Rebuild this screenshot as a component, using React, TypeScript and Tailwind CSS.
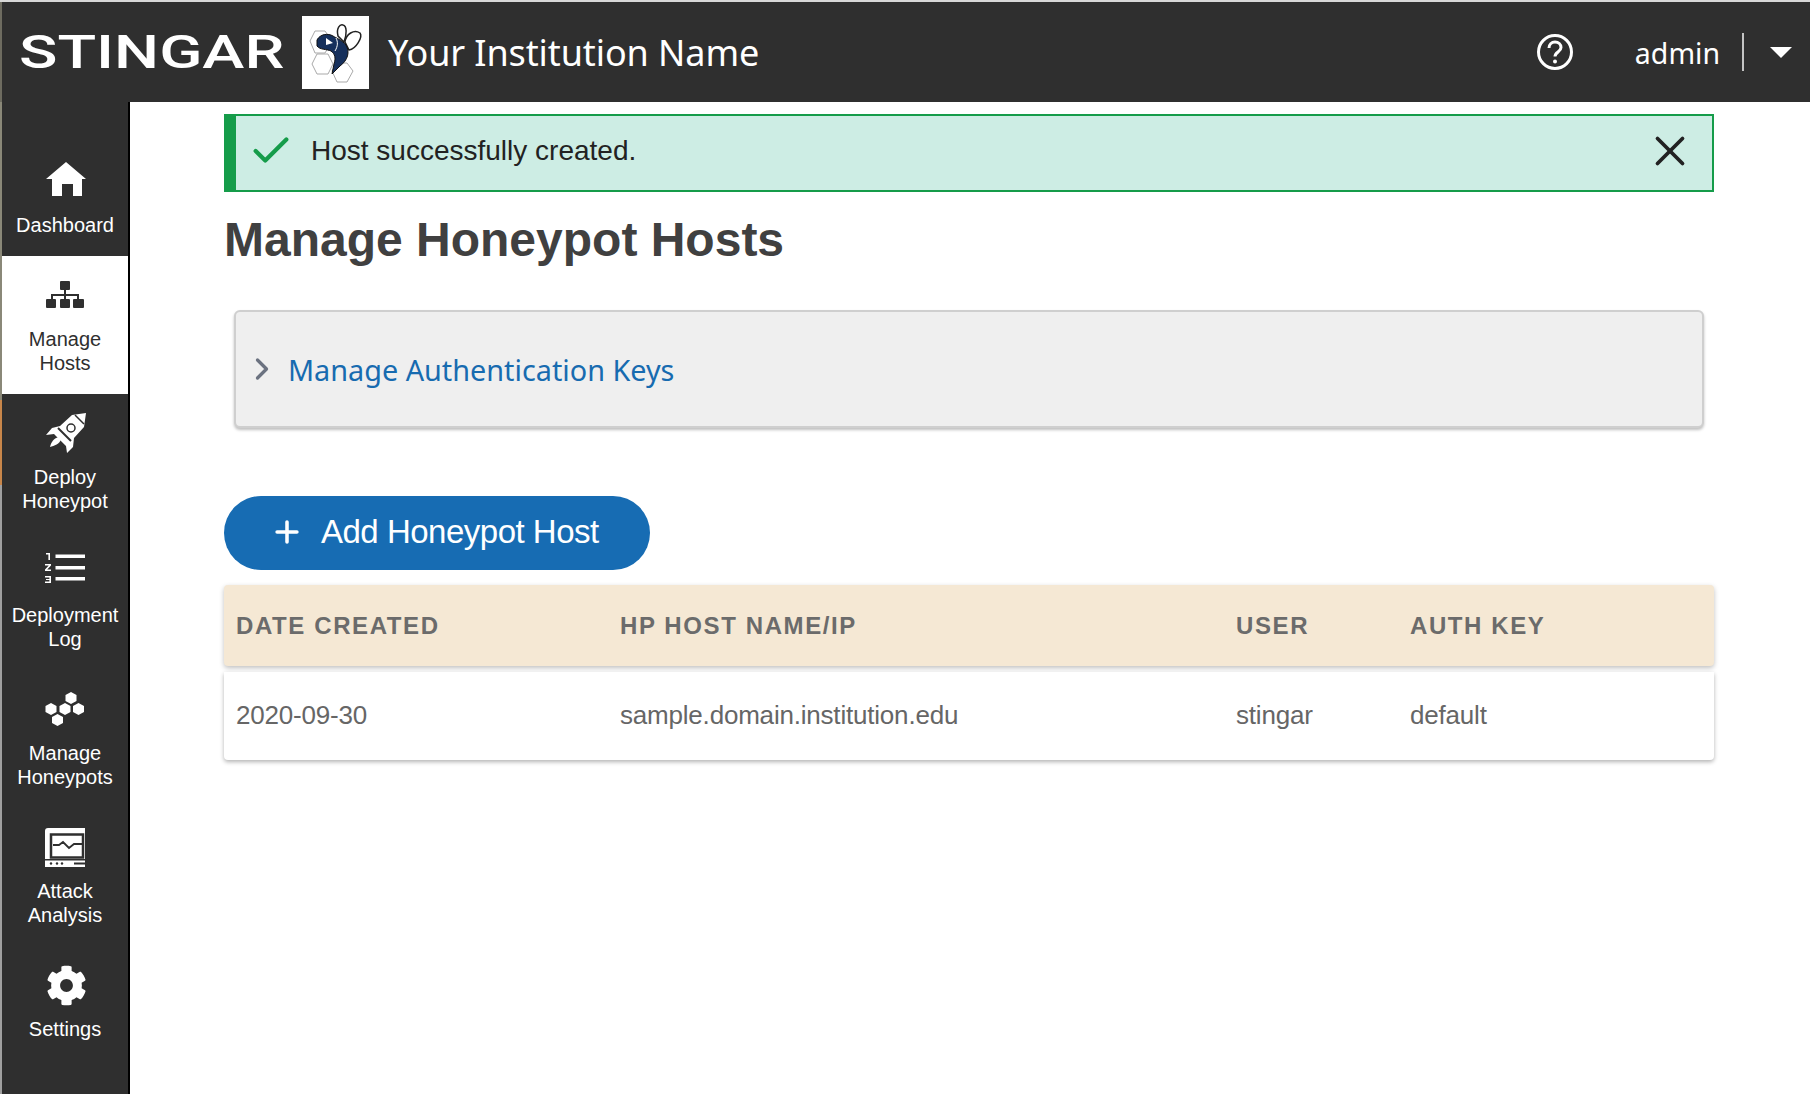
import { FaCog } from "react-icons/fa"
import { Check, ChevronRight, Plus, X } from "lucide-react"

const sans = "font-['Liberation_Sans',Arial,sans-serif]"
const noto = "font-['Noto_Sans','Open_Sans',sans-serif]"

function HomeIcon() {
    return (
        <svg width="40" height="34" viewBox="0 0 40 34" fill="white">
            <path d="M20 0 L40 17 L36 17 L36 34 L27 34 L27 22 L16 22 L16 34 L6 34 L6 17 L0 17 Z" />
        </svg>
    )
}

function SitemapIcon() {
    return (
        <svg width="38" height="28" viewBox="0 0 38 28" fill="#2f2f2f">
            <rect x="14" y="0" width="10" height="9" rx="1" />
            <path d="M18 9h2v4h13v5h-2v-3H20v3h-2v-3H7v3H5v-5h13z" />
            <rect x="0" y="18" width="10" height="9" rx="1" />
            <rect x="14" y="18" width="10" height="9" rx="1" />
            <rect x="27" y="18" width="11" height="9" rx="1" />
        </svg>
    )
}

function RocketIcon() {
    return (
        <svg width="40" height="40" viewBox="0 0 40 40" fill="white">
            <path d="M40 0 L38 14 L28 25 L27 34 L21 40 L20 33 L8 21 L0 22 L6 15 L14 13 L26 2 Z" />
            <path d="M13 24 L15 26 C14 31 8 33 4 34 C5 29 8 25 13 24Z" />
            <path d="M12 15 L25 28" stroke="#2f2f2f" strokeWidth="2" />
            <path d="M29 2 L38 11" stroke="#2f2f2f" strokeWidth="1.500" />
            <circle cx="25" cy="15" r="4" fill="white" stroke="#2f2f2f" strokeWidth="1.500" />
        </svg>
    )
}

function ListIcon() {
    return (
        <svg width="40" height="30" viewBox="0 0 40 30" fill="white">
            <rect x="10.5" y="1.5" width="29.5" height="3.5" />
            <rect x="10.5" y="13" width="29.5" height="3.5" />
            <rect x="10.5" y="24" width="29.5" height="3.5" />
            <path d="M1 0h4v7H3.4V1.5H1z" />
            <path d="M0 11h6v1.5L2.2 16.5H6V18H0v-1.5L3.8 12.5H0z" />
            <path d="M0 23h6v7H0v-1.4h4.4v-1.5H1v-1.2h3.4v-1.5H0z" />
        </svg>
    )
}

function HoneycombIcon() {
    return (
        <svg width="40" height="34" viewBox="0 0 40 34" fill="white">
            <path d="M26 0l5.5 3v6L26 12l-5.5-3V3z" />
            <path d="M6 11l5.5 3v6L6 23 .5 20v-6z" />
            <path d="M20 11l5.5 3v6L20 23l-5.5-3v-6z" />
            <path d="M33.5 11l5.5 3v6l-5.5 3-5.5-3v-6z" />
            <path d="M12.5 22l5.5 3v6l-5.5 3L7 31v-6z" />
        </svg>
    )
}

function MonitorIcon() {
    return (
        <svg width="40" height="39" viewBox="0 0 40 39" fill="none">
            <path fill="white" d="M3 0H40V39H0V3a3 3 0 0 1 3-3z" />
            <rect x="6" y="6.500" width="32" height="23" fill="white" stroke="#2f2f2f" strokeWidth="2.500" />
            <path d="M8 17h6l4-3 6 6 5-4h8" stroke="#2f2f2f" strokeWidth="1.800" />
            <rect x="0" y="31" width="40" height="1.500" fill="#2f2f2f" />
            <circle cx="6" cy="35.500" r="1.200" fill="#2f2f2f" />
            <circle cx="12" cy="35.500" r="1.200" fill="#2f2f2f" />
            <circle cx="17" cy="35.500" r="1.200" fill="#2f2f2f" />
            <rect x="29" y="34.500" width="11" height="2" fill="#2f2f2f" />
        </svg>
    )
}

function BeeLogo() {
    return (
        <svg width="67" height="73" viewBox="0 0 67 73" className="bg-white">
            <g fill="none" stroke="#a9a9a9" strokeWidth="1">
                <path d="M8 25L13 15H23L30 25L23 37H13Z" />
                <path d="M10 48L15 38H26L31 48L26 58H15Z" />
                <path d="M30 55L35 47H45L51 55L45 66H35Z" />
            </g>
            <path d="M36 20C34 12 38 8 41 9C45 10 45 18 42 26Z" fill="white" stroke="#222" strokeWidth="1.500" />
            <path d="M43 26C44 18 52 13 58 17C61 21 54 33 47 34Z" fill="white" stroke="#222" strokeWidth="1.500" />
            <path d="M15 24C18 18 26 17 31 20C34 22 40 24 44 29C48 36 46 44 38 50L30 58L32 48C34 42 33 38 29 35C25 33 18 34 15 30Z" fill="#16305c" stroke="#111" strokeWidth="1" />
            <path d="M24 22L31 27L24 29Z" fill="white" />
            <path d="M34 22C36 26 36 30 33 35" stroke="white" strokeWidth="1" fill="none" />
        </svg>
    )
}

const navItems = [
    { label: ["Dashboard"], icon: <HomeIcon />, first: true, iconCls: "ml-[2px] -mt-[1px]", labelCls: "mt-[13px]" },
    { label: ["Manage", "Hosts"], icon: <SitemapIcon />, active: true, iconCls: "", labelCls: "mt-[11px]" },
    { label: ["Deploy", "Honeypot"], icon: <RocketIcon />, iconCls: "ml-[1px]", labelCls: "mt-[11px]" },
    { label: ["Deployment", "Log"], icon: <ListIcon />, iconCls: "-mt-[3px]", labelCls: "mt-[14px]" },
    { label: ["Manage", "Honeypots"], icon: <HoneycombIcon />, iconCls: "mt-[1px]", labelCls: "mt-[11px]" },
    { label: ["Attack", "Analysis"], icon: <MonitorIcon />, iconCls: "mt-[1px]", labelCls: "mt-[11px]" },
    { label: ["Settings"], icon: <FaCog size={41} color="white" />, iconCls: "ml-[3px] mt-[2px]", labelCls: "mt-[10px]" },
]

const columns = [
    { w: "w-[384px]", head: "DATE CREATED", value: "2020-09-30" },
    { w: "w-[616px]", head: "HP HOST NAME/IP", value: "sample.domain.institution.edu" },
    { w: "w-[174px]", head: "USER", value: "stingar" },
    { w: "w-[200px]", head: "AUTH KEY", value: "default" },
]

export default function App() {
    return (
        <div className={`w-[1810px] h-[1094px] overflow-hidden bg-white flex flex-col ${sans}`}>
            <div className="h-[2px] bg-[#d8d8d8]" />
            {/* Header */}
            <header className="h-[100px] bg-[#2f2f2f] border-l-2 border-[#6e6c60] flex items-center text-white shrink-0">
                <div className="w-[282px] pl-[17px]">
                    <span className="block origin-left scale-x-[1.38] font-['Roboto',sans-serif] font-medium text-[46px] leading-none">STINGAR</span>
                </div>
                <div className="ml-[18px]">
                    <BeeLogo />
                </div>
                <span className={`ml-[19px] mt-[2px] text-[36px] leading-none tracking-[-0.1px] ${noto}`}>Your Institution Name</span>
                <div className="ml-auto flex items-center">
                    <svg width="38" height="38" viewBox="0 0 38 38" fill="none" stroke="white" strokeWidth="3">
                        <circle cx="19" cy="19" r="16.500" />
                        <path d="M13 15c0-3.500 2.500-6 6-6s6 2.300 6 5.500c0 4.500-6 4.500-6 9" strokeWidth="3" />
                        <circle cx="19" cy="28.500" r="2" fill="white" stroke="none" />
                    </svg>
                    <span className={`ml-[61px] mt-[2px] text-[28.500px] leading-none ${noto}`}>admin</span>
                    <div className="ml-[22px] w-[2px] h-[38px] bg-[#c4c4c4]" />
                    <div className="ml-[26px] mr-[18px] w-0 h-0 border-x-[11px] border-x-transparent border-t-[11px] border-t-white" />
                </div>
            </header>

            <div className="flex flex-1 min-h-0">
                {/* Left edge of the window behind */}
                <div className="w-[2px] shrink-0 flex flex-col">
                    <div className="h-[298px] bg-[#8a8878]" />
                    <div className="h-[85px] bg-[#c8864a]" />
                    <div className="flex-1 bg-[#a0a0a0]" />
                </div>

                {/* Sidebar */}
                <nav className="w-[128px] shrink-0 bg-[#2f2f2f] border-r-2 border-r-black">
                    {navItems.map((item) => (
                        <div
                            key={item.label.join(" ")}
                            className={`flex flex-col items-center text-[20px] leading-[24px] text-center ${item.first ? "h-[154px] pt-[57px]" : "h-[137.800px] pt-[18px]"} ${item.active ? "bg-white text-[#2f2f2f]" : "text-white"}`}
                        >
                            <div className={`h-[42px] flex items-center justify-center ${item.iconCls}`}>{item.icon}</div>
                            <div className={item.labelCls}>
                                {item.label.map((line) => (
                                    <div key={line}>{line}</div>
                                ))}
                            </div>
                        </div>
                    ))}
                </nav>

                {/* Main */}
                <main className="flex-1 pl-[94px] pr-[96px] pt-[12px] text-[#404040]">
                    <div className="h-[78px] bg-[#cdede4] border-2 border-l-[12px] border-[#159c4a] flex items-center pl-[12px] pr-[17px]">
                        <div className="flex items-center w-full -mt-[4px]">
                            <Check size={46} strokeWidth={2.200} className="text-[#159c4a]" />
                            <span className="ml-[17px] text-[28px] text-[#222]">Host successfully created.</span>
                            <X size={50} strokeWidth={1.800} className="ml-auto -mt-[1px] text-[#222]" />
                        </div>
                    </div>

                    <h1 className="mt-[14px] text-[48px] leading-[68px] font-bold text-[#404040]">Manage Honeypot Hosts</h1>

                    <div className="mt-[36px] mx-[10px] h-[118px] bg-[#efefef] border-2 border-[#cfcfcf] rounded-[6px] shadow-[0_2px_3px_rgba(0,0,0,0.25)] flex items-center pl-[8px]">
                        <ChevronRight size={36} strokeWidth={2.200} className="text-[#6b7280]" />
                        <span className={`ml-[8px] mt-[1px] text-[28.800px] text-[#176bb0] ${noto}`}>Manage Authentication Keys</span>
                    </div>

                    <button className="mt-[68px] h-[74px] w-[426px] rounded-full bg-[#176cb3] text-white flex items-center pl-[46px] pb-[2px] text-[33px] tracking-[-0.5px]">
                        <Plus size={34} strokeWidth={2.500} />
                        <span className="ml-[17px]">Add Honeypot Host</span>
                    </button>

                    <div className="mt-[15px] h-[81px] bg-[#f5e8d4] rounded-[4px] shadow-[0_2px_5px_rgba(0,0,0,0.25)] flex items-center pl-[12px] text-[24px] font-bold tracking-[1.600px] text-[#6b6b6b]">
                        {columns.map((col) => (
                            <div key={col.head} className={col.w}>{col.head}</div>
                        ))}
                    </div>
                    <div className="mt-[6px] h-[88px] bg-white rounded-b-[4px] shadow-[0_2px_4px_rgba(0,0,0,0.3)] flex items-center pl-[12px] pb-[2px] text-[26px] tracking-[-0.2px] text-[#666]">
                        {columns.map((col) => (
                            <div key={col.head} className={col.w}>{col.value}</div>
                        ))}
                    </div>
                </main>
            </div>
        </div>
    )
}
